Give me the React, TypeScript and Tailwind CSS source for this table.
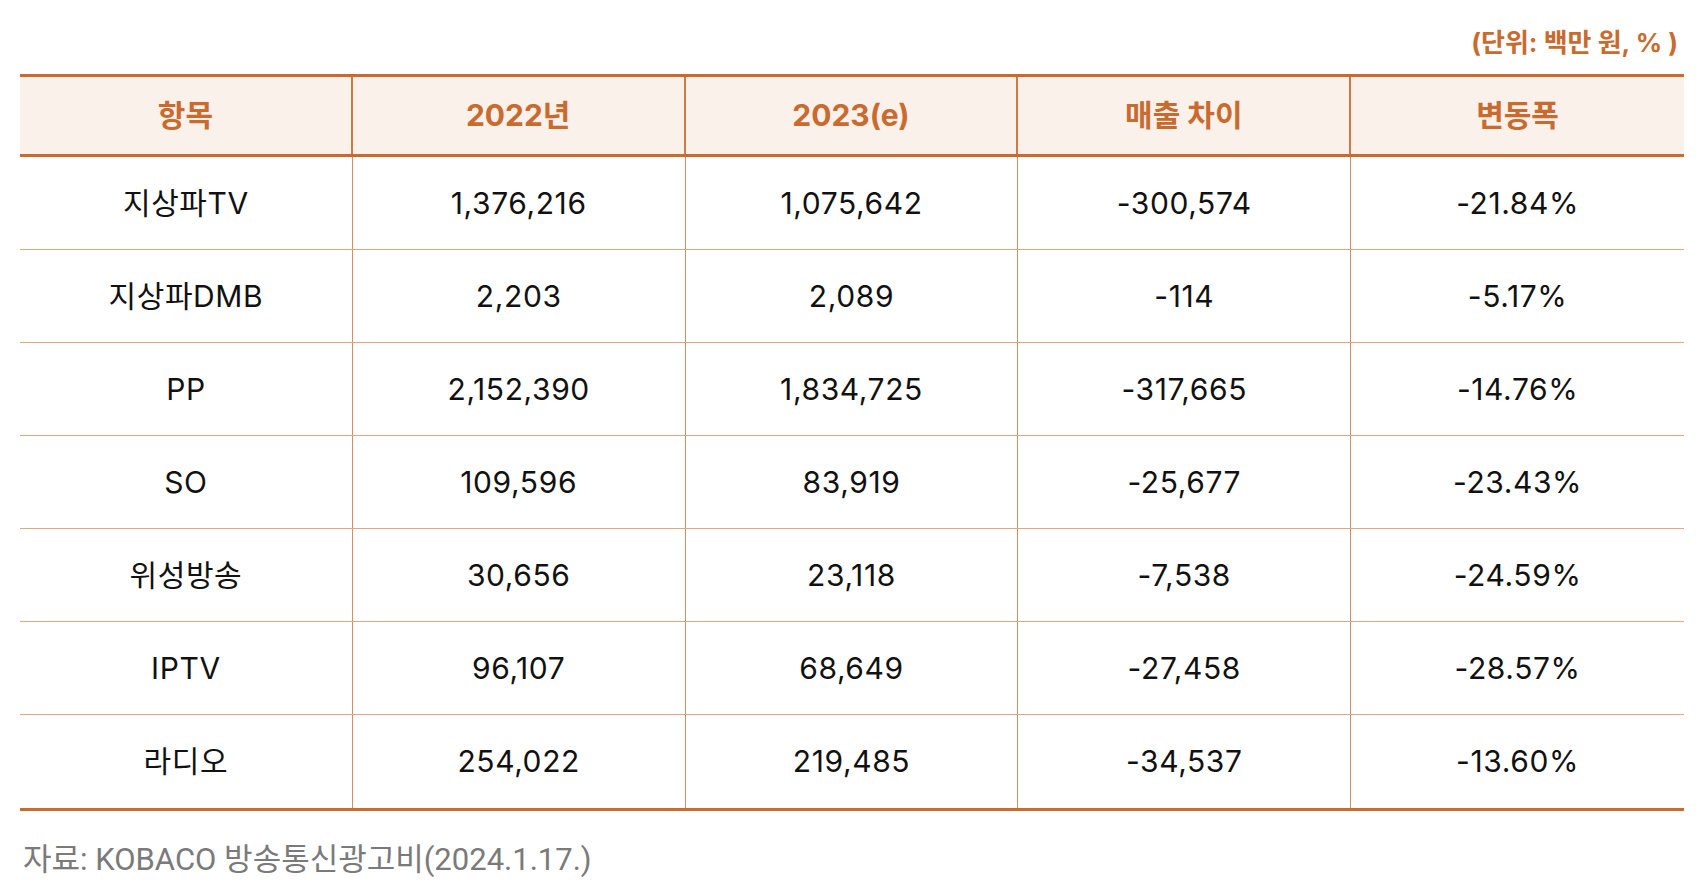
import * as React from "react";

const headers = ["항목", "2022년", "2023(e)", "매출 차이", "변동폭"];

const rows: string[][] = [
  ["지상파TV", "1,376,216", "1,075,642", "-300,574", "-21.84%"],
  ["지상파DMB", "2,203", "2,089", "-114", "-5.17%"],
  ["PP", "2,152,390", "1,834,725", "-317,665", "-14.76%"],
  ["SO", "109,596", "83,919", "-25,677", "-23.43%"],
  ["위성방송", "30,656", "23,118", "-7,538", "-24.59%"],
  ["IPTV", "96,107", "68,649", "-27,458", "-28.57%"],
  ["라디오", "254,022", "219,485", "-34,537", "-13.60%"],
];

const font = { fontFamily: 'Inter, "Noto Sans CJK KR", sans-serif' };
const footFont = { fontFamily: 'Roboto, "Noto Sans CJK KR", sans-serif' };

export default function App() {
  return (
    <div className="w-[1698px] h-[890px] bg-white" style={font}>
      {/* unit label */}
      <div className="h-[74px] pt-[26px] pr-[20px] text-right text-[26px] leading-[34px] font-bold text-[#c96a2f]">
        (단위: 백만 원, % )
      </div>

      {/* table */}
      <div className="ml-[20px] w-[1664px] border-t-[3px] border-b-[3px] border-[#c96a2f]">
        <div className="grid grid-cols-5 h-[80px] bg-[#fbf1eb] border-b-[3px] border-[#c96a2f]">
          {headers.map((h, i) => (
            <div
              key={h}
              className={
                "flex items-center justify-center text-[30px] font-bold text-[#c96a2f] " +
                (i < 4 ? "border-r-2 border-[#cf7a45]" : "")
              }
            >
              {h}
            </div>
          ))}
        </div>
        {rows.map((r, ri) => (
          <div
            key={r[0]}
            className={
              "grid grid-cols-5 h-[93px] " +
              (ri < rows.length - 1 ? "border-b border-[#e3a581]" : "")
            }
          >
            {r.map((c, i) => (
              <div
                key={i}
                className={
                  "flex items-center justify-center text-[30px] tracking-[0.02em] text-[#111] " +
                  (i < 4 ? "border-r border-[#d98d5e]" : "")
                }
              >
                {c}
              </div>
            ))}
          </div>
        ))}
      </div>

      {/* source */}
      <div
        className="mt-[30px] ml-[23px] text-[31px] leading-[38px] text-[#7a7a7a]"
        style={footFont}
      >
        자료: KOBACO 방송통신광고비(2024.1.17.)
      </div>
    </div>
  );
}
